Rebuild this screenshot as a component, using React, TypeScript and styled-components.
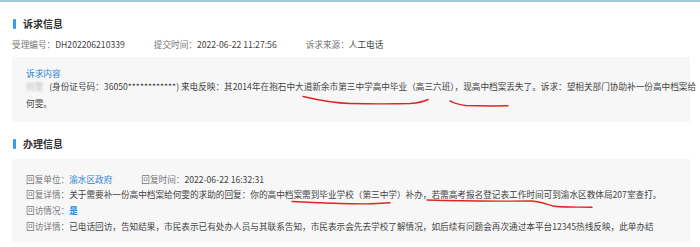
import React from "react";
import styled, { createGlobalStyle } from "styled-components";

const GlobalStyle = createGlobalStyle`
  html, body {
    margin: 0;
    padding: 0;
    background: #ffffff;
  }
  body {
    font-family: "Noto Sans CJK SC", "Liberation Sans", sans-serif;
    color: #333;
  }
`;

interface Field {
  label: string;
  value: string;
  tone?: "link" | "strong";
}

const metaFields: Field[] = [
  { label: "受理编号：", value: "DH202206210339" },
  { label: "提交时间：", value: "2022-06-22 11:27:56" },
  { label: "诉求来源：", value: "人工电话" },
];

const replyFields: Field[] = [
  { label: "回复单位：", value: "渝水区政府", tone: "link" },
  { label: "回复时间：", value: "2022-06-22 16:32:31" },
];

const App = () => {
  return (
    <Page>
      <GlobalStyle />
      <TopRule />
      <Content>
        <SectionTitle>诉求信息</SectionTitle>
        <MetaRow $offset={6}>
          {metaFields.map((f) => (
            <MetaItem key={f.label}>
              <Label>{f.label}</Label>
              <Value>{f.value}</Value>
            </MetaItem>
          ))}
        </MetaRow>
        <Panel>
          <PanelHeading>诉求内容</PanelHeading>
          <Paragraph>
            <Blurred>何雯</Blurred> (身份证号码：36050************) 来电反映：其2014年在抱石中大道新余市第三中学高中毕业（高三六班），现高中档案丢失了。诉求：望相关部门协助补一份高中档案给
            <br />
            何雯。
          </Paragraph>
        </Panel>

        <SectionTitle>办理信息</SectionTitle>
        <Panel $compact>
          <MetaRow>
            {replyFields.map((f) => (
              <MetaItem key={f.label}>
                <Label>{f.label}</Label>
                <Value $tone={f.tone}>{f.value}</Value>
              </MetaItem>
            ))}
          </MetaRow>
          <DetailRow>
            <Label>回复详情：</Label>
            <Value>
              关于需要补一份高中档案给何雯的求助的回复：你的高中档案需到毕业学校（第三中学）补办，若需高考报名登记表工作时间可到渝水区教体局207室查打。
            </Value>
          </DetailRow>
          <DetailRow>
            <Label>回访情况：</Label>
            <Value $tone="strong">是</Value>
          </DetailRow>
          <DetailRow>
            <Label>回访详情：</Label>
            <Value>
              已电话回访，告知结果，市民表示已有处办人员与其联系告知，市民表示会先去学校了解情况，如后续有问题会再次通过本平台12345热线反映，此单办结
            </Value>
          </DetailRow>
        </Panel>
      </Content>

      {/* hand-drawn red marks on top of the page */}
      <Marks viewBox="0 0 700 247" width="700" height="247">
        <path d="M303 96.5 C318 100 332 103 350 103.5 C372 104 392 104 410 103.5 C418 103 424 101.5 428 99.5" />
        <path d="M450 101 C455 103 459 105 466 105.5 C480 106 495 106 508 105.8" />
        <path d="M292 201.5 C320 203 350 204 372 203.8 C380 203.6 386 203.2 390 202.8" />
        <path d="M427 200 C455 201 490 201.3 530 201 C540 201.2 546 204 553 206 C560 207.5 575 207 592 207.3" />
      </Marks>
    </Page>
  );
};

const Page = styled.div`
  position: relative;
  width: 700px;
  height: 247px;
  overflow: hidden;
`;

const TopRule = styled.div`
  height: 2px;
  background: #a3c7dd;
`;

const Content = styled.div`
  padding: 0 10px 0 12px;
  display: flex;
  flex-direction: column;
`;

const SectionTitle = styled.h2`
  margin: 15px 0 0 1px;
  display: flex;
  align-items: center;
  gap: 7px;
  height: 14px;
  font-size: 10px;
  font-weight: 700;
  color: #333;
  line-height: 14px;

  &::before {
    content: "";
    width: 3px;
    height: 10px;
    border-radius: 1px;
    background: #3a9be8;
  }
`;

const MetaRow = styled.div<{ $offset?: number }>`
  display: flex;
  gap: 29px;
  margin-top: ${(p) => p.$offset ?? 0}px;
  line-height: 14px;
  font-size: 8.64px;
`;

const MetaItem = styled.div`
  display: flex;
  white-space: nowrap;
`;

const Label = styled.span`
  color: #777;
  white-space: nowrap;
`;

const Value = styled.span<{ $tone?: "link" | "strong" }>`
  color: ${(p) => (p.$tone ? "#2f86d6" : "#444")};
  font-weight: ${(p) => (p.$tone === "strong" ? 700 : 400)};
`;

const Panel = styled.div<{ $compact?: boolean }>`
  margin-top: ${(p) => (p.$compact ? "8px" : "6px")};
  background: #f7f7f7;
  padding: ${(p) => (p.$compact ? "13px 14px 8px" : "11px 14px 10px")};
  width: 650px;
`;

const PanelHeading = styled.div`
  font-size: 8.64px;
  line-height: 10px;
  color: #2f86d6;
`;

const Paragraph = styled.p`
  margin: 0;
  font-size: 8.64px;
  line-height: 17px;
  color: #444;
  white-space: nowrap;
`;

const Blurred = styled.span`
  color: #bbb;
  filter: blur(1.2px);
  margin-right: 4px;
`;

const DetailRow = styled.div`
  display: flex;
  font-size: 8.64px;
  line-height: 16px;
  white-space: nowrap;
`;

const Marks = styled.svg`
  position: absolute;
  left: 0;
  top: 0;
  pointer-events: none;

  path {
    fill: none;
    stroke: #e02424;
    stroke-width: 1.4;
    stroke-linecap: round;
  }
`;

export default App;
